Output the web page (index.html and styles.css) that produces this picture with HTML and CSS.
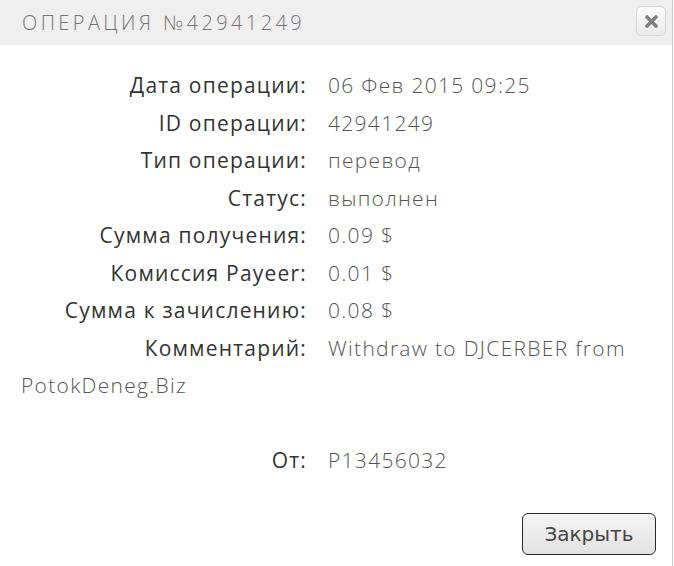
FILE: index.html
```html
<!DOCTYPE html>
<html lang="ru">
  <head>
    <meta charset="UTF-8" />
    <title>Операция №42941249</title>
    <link rel="stylesheet" href="styles.css">
  </head>
  <body>
    <div class="dialog">
      <div class="dialog-head">
        <span class="dialog-title">Операция №42941249</span>
        <button class="close-x" type="button">
          <svg width="13" height="13" viewBox="0 0 13 13">
            <path d="M2 2 L11 11 M11 2 L2 11" stroke="#7f7f7f" stroke-width="3.6" stroke-linecap="round" />
          </svg>
        </button>
      </div>

      <div class="info">
        <span class="lbl">Дата операции:</span>06 Фев 2015 09:25<br>
        <span class="lbl">ID операции:</span>42941249<br>
        <span class="lbl">Тип операции:</span>перевод<br>
        <span class="lbl">Статус:</span>выполнен<br>
        <span class="lbl">Сумма получения:</span>0.09 $<br>
        <span class="lbl">Комиссия Payeer:</span>0.01 $<br>
        <span class="lbl">Сумма к зачислению:</span>0.08 $<br>
        <span class="lbl">Комментарий:</span>Withdraw to DJCERBER from PotokDeneg.Biz<br>
        <br>
        <span class="lbl">От:</span>P13456032
      </div>

      <div class="dialog-foot">
        <button class="btn-close" type="button">Закрыть</button>
      </div>
    </div>
  </body>
</html>
```

FILE: styles.css
```css
* {
  margin: 0;
  padding: 0;
  box-sizing: border-box;
}

body {
  background: #fff;
  font-family: "Open Sans", Arial, sans-serif;
}

.dialog {
  width: 673px;
  height: 566px;
  border-right: 1px solid #c8c8c8;
  background: #fff;
}

.dialog-head {
  height: 45px;
  background: #efefef;
  display: flex;
  align-items: center;
  justify-content: space-between;
  padding: 0 6px 0 22px;
}

.dialog-title {
  font-size: 20px;
  font-weight: 300;
  letter-spacing: 3.4px;
  text-transform: uppercase;
  color: #747474;
}

.close-x {
  width: 30px;
  height: 30px;
  margin-top: -3px;
  display: flex;
  align-items: center;
  justify-content: center;
  border: 1px solid #d6d6d6;
  border-radius: 5px;
  background: linear-gradient(#fafafa, #ececec);
  cursor: pointer;
}

.info {
  padding: 22px 20px 0 21px;
  font-size: 21px;
  line-height: 37.5px;
  letter-spacing: 1.3px;
  color: #555;
  font-weight: 300;
}

.lbl {
  display: inline-block;
  width: 286px;
  margin-right: 21px;
  text-align: right;
  color: #333;
  font-weight: 500;
  letter-spacing: 1.2px;
}

.dialog-foot {
  display: flex;
  justify-content: flex-end;
  padding: 33px 16px 0 0;
}

.btn-close {
  width: 134px;
  height: 42px;
  border: 1px solid #2a2a2a;
  border-radius: 6px;
  background: linear-gradient(#f6f6f6, #e2e2e2);
  font-family: "DejaVu Sans", Verdana, sans-serif;
  font-size: 20px;
  color: #444;
  cursor: pointer;
}
```
